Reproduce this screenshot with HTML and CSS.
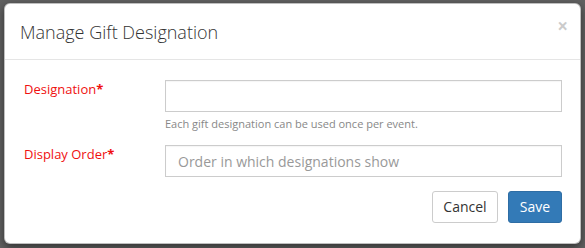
FILE: index.html
```html
<!DOCTYPE html>
<html>
<head>
<meta charset="utf-8">
<link rel="stylesheet" href="styles.css">
</head>
<body>
<div class="backdrop">
  <div class="modal">
    <div class="modal-header">
      <h4 class="modal-title">Manage Gift Designation</h4>
      <span class="close">×</span>
    </div>
    <div class="modal-body">
      <div class="form-row">
        <label class="label">Designation<b>*</b></label>
        <div class="field">
          <input class="input" type="text">
          <div class="help">Each gift designation can be used once per event.</div>
        </div>
      </div>
      <div class="form-row">
        <label class="label">Display Order<b>*</b></label>
        <div class="field">
          <input class="input" type="text" placeholder="Order in which designations show">
        </div>
      </div>
      <div class="actions">
        <button class="btn btn-default btn-cancel">Cancel</button>
        <button class="btn btn-primary btn-save">Save</button>
      </div>
    </div>
  </div>
</div>
</body>
</html>
```
FILE: styles.css
```css
html, body {
  margin: 0;
  padding: 0;
}
body {
  background: #616161;
  font-family: "Open Sans", "DejaVu Sans", sans-serif;
  width: 585px;
  height: 248px;
  overflow: hidden;
}
.backdrop {
  padding: 3px 4px 0 4px;
}
.modal {
  box-sizing: border-box;
  width: 577px;
  height: 241px;
  background: #fff;
  border: 1px solid rgba(0,0,0,0.25);
  border-radius: 6px;
  box-shadow: 0 3px 9px rgba(0,0,0,0.5);
}
.modal-header {
  display: flex;
  align-items: flex-start;
  justify-content: space-between;
  padding: 15px 15px 15px 15px;
  height: 25px;
  border-bottom: 1px solid #e5e5e5;
}
.modal-title {
  margin: 0;
  font-size: 18px;
  font-weight: 300;
  line-height: 26px;
  color: #333;
}
.close {
  font-size: 19px;
  font-weight: 700;
  line-height: 1;
  color: #000;
  opacity: 0.2;
  margin-top: -2px;
  margin-right: -3px;
}
.modal-body {
  padding: 20px 18px 20px 19px;
}
.form-row {
  display: grid;
  grid-template-columns: 141px 1fr;
  margin-bottom: 14px;
}
.label {
  color: #f01010;
  font-size: 13px;
  font-weight: 500;
  line-height: 18px;
}
.label b {
  font-weight: 700;
}
.input {
  display: block;
  box-sizing: border-box;
  width: 100%;
  height: 32px;
  border: 1px solid #ccc;
  border-radius: 0;
  padding: 6px 12px;
  font-family: inherit;
  font-size: 14px;
  color: #555;
  margin: 0;
  box-shadow: inset 0 1px 1px rgba(0,0,0,0.04);
}
.input::placeholder {
  color: #999;
}
.help {
  margin-top: 4px;
  font-size: 11px;
  line-height: 15px;
  color: #888;
}
.actions {
  display: flex;
  justify-content: flex-end;
  gap: 10px;
  margin-top: 1px;
  padding-right: 0;
}
.btn {
  font-family: inherit;
  font-size: 14px;
  line-height: 20px;
  height: 32px;
  padding: 5px 0;
  text-align: center;
  border-radius: 3px;
  border: 1px solid #ccc;
  cursor: pointer;
}
.btn-cancel {
  width: 66px;
}
.btn-save {
  width: 54px;
}
.btn-default {
  background: #fff;
  color: #333;
}
.btn-primary {
  background: #337ab7;
  border-color: #2e6da4;
  color: #fff;
}
```
